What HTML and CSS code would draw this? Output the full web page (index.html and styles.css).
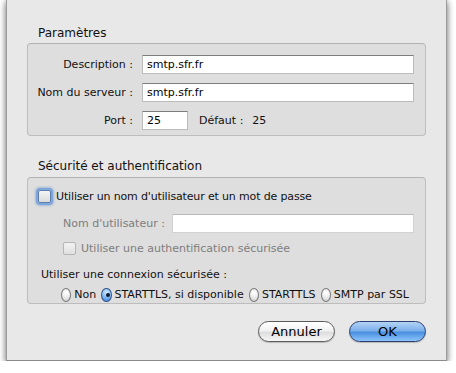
FILE: index.html
```html
<!DOCTYPE html>
<html lang="fr">
<head>
<meta charset="utf-8">
<title>Paramètres SMTP</title>
<link rel="stylesheet" href="styles.css">
</head>
<body>
<div class="sheet">
  <div class="section-title">Paramètres</div>
  <div class="box box-params">
    <div class="form-row">
      <label class="lbl">Description :</label>
      <div class="field wide">smtp.sfr.fr</div>
    </div>
    <div class="form-row">
      <label class="lbl">Nom du serveur :</label>
      <div class="field wide">smtp.sfr.fr</div>
    </div>
    <div class="form-row">
      <label class="lbl">Port :</label>
      <div class="port-line">
        <div class="field port">25</div>
        <span class="default-lbl">Défaut :</span>
        <span class="default-val">25</span>
      </div>
    </div>
  </div>

  <div class="section-title second">Sécurité et authentification</div>
  <div class="box box-sec">
    <div class="check-row">
      <span class="checkbox focused"></span>
      <span class="tight">Utiliser un nom d'utilisateur et un mot de passe</span>
    </div>
    <div class="user-row">
      <span class="lbl-dis">Nom d'utilisateur :</span>
      <div class="field user"></div>
    </div>
    <div class="check-row sub">
      <span class="checkbox disabled"></span>
      <span class="dis">Utiliser une authentification sécurisée</span>
    </div>
    <div class="conn-lbl">Utiliser une connexion sécurisée :</div>
    <div class="radio-row">
      <span class="radio"></span><span class="rlabel">Non</span>
      <span class="radio on"></span><span class="rlabel">STARTTLS, si disponible</span>
      <span class="radio"></span><span class="rlabel">STARTTLS</span>
      <span class="radio"></span><span class="rlabel">SMTP par SSL</span>
    </div>
  </div>

  <div class="buttons">
    <button class="btn">Annuler</button>
    <button class="btn primary">OK</button>
  </div>
</div>
</body>
</html>
```
FILE: styles.css
```css
html, body {
  margin: 0;
  padding: 0;
  background: #ffffff;
}
body {
  font-family: "DejaVu Sans", "Liberation Sans", sans-serif;
  font-size: 11px;
  color: #111;
}
.sheet {
  margin-left: 6px;
  width: 441px;
  height: 361px;
  background: #e8e8e8;
  border-left: 1px solid #9c9c9c;
  border-right: 1px solid #9c9c9c;
  border-bottom: 1px solid #8a8a8a;
  box-shadow: 0 3px 7px rgba(0,0,0,0.45), -2px 0 4px rgba(0,0,0,0.12), 2px 0 4px rgba(0,0,0,0.12);
  padding: 25px 20px 0 20px;
  box-sizing: border-box;
  display: flex;
  flex-direction: column;
}
.section-title {
  font-size: 12px;
  line-height: 16px;
  height: 16px;
  margin-left: 11px;
  margin-bottom: 2px;
}
.section-title.second {
  margin-top: 22px;
  margin-bottom: 3px;
}
.box {
  background: #dedede;
  border: 1px solid #bdbdbd;
  border-top-color: #b3b3b3;
  border-radius: 4px;
  box-sizing: border-box;
}
.box-params {
  height: 93px;
  padding: 11px 11px 0 0;
  display: flex;
  flex-direction: column;
  gap: 9px;
}
.form-row {
  display: grid;
  grid-template-columns: 105px 1fr;
  column-gap: 9px;
  align-items: center;
  height: 19px;
}
.lbl {
  text-align: right;
  white-space: nowrap;
}
.field {
  height: 19px;
  box-sizing: border-box;
  background: #fff;
  border: 1px solid #bcbcbc;
  border-top-color: #7e7e7e;
  padding: 0 4px;
  line-height: 17px;
  color: #000;
}
.field.port { width: 46px; }
.port-line {
  display: flex;
  align-items: center;
}
.default-lbl { margin-left: 11px; }
.default-val { margin-left: 9px; }

.box-sec {
  height: 127px;
  padding: 10px 11px 0 9px;
  display: flex;
  flex-direction: column;
}
.check-row {
  display: flex;
  align-items: center;
  height: 17px;
}
.tight { letter-spacing: -0.15px; }
.check-row .checkbox { margin-right: 5px; }
.checkbox {
  width: 13px;
  height: 13px;
  box-sizing: border-box;
  border: 1px solid #8a8a8a;
  border-radius: 2px;
  background: linear-gradient(#ffffff, #e6e6e6 60%, #d6d6d6);
  display: inline-block;
}
.checkbox.focused {
  margin-left: 1px;
  border-color: #5c7fb0;
  box-shadow: 0 0 0 2px #7fa6d9, 0 0 2px 3px rgba(110,150,210,0.5);
  background: linear-gradient(#f4f4f4, #dcdcdc);
}
.checkbox.disabled {
  border-color: #b6b6b6;
  background: linear-gradient(#f2f2f2, #e0e0e0);
}
.user-row {
  display: flex;
  align-items: center;
  margin-top: 9px;
  padding-left: 26px;
  height: 19px;
}
.lbl-dis, .dis { color: #7d7d7d; }
.field.user {
  flex: 1;
  margin-left: 7px;
  border-color: #d2d2d2;
  border-top-color: #b8b8b8;
}
.check-row.sub {
  margin-top: 7px;
  padding-left: 26px;
}
.conn-lbl {
  margin-top: 11px;
  margin-left: 4px;
  height: 16px;
  line-height: 16px;
}
.radio-row {
  display: flex;
  align-items: center;
  margin-top: 3px;
  padding-left: 24px;
  height: 17px;
  white-space: nowrap;
}
.radio {
  width: 14px;
  height: 14px;
  box-sizing: border-box;
  border-radius: 50%;
  border: 1px solid #7a7a7a;
  background: radial-gradient(circle at 50% 30%, #ffffff 0%, #f0f0f0 40%, #cfcfcf 100%);
  display: inline-block;
  position: relative;
  margin-right: 3px;
}
.radio.on {
  border-color: #34558a;
  background: radial-gradient(circle at 50% 30%, #d7ecff 0%, #86bdf4 45%, #3a7fd6 100%);
}
.radio.on::after {
  content: "";
  position: absolute;
  left: 4px;
  top: 4px;
  width: 4px;
  height: 4px;
  border-radius: 50%;
  background: #0d1a2c;
}
.rlabel { margin-right: 5px; }

.buttons {
  display: flex;
  justify-content: flex-end;
  gap: 14px;
  margin-top: 17px;
}
.btn {
  width: 77px;
  height: 21px;
  border-radius: 11px;
  border: 1px solid #5a5a5a;
  background: linear-gradient(#ffffff 0%, #f2f2f2 45%, #dedede 55%, #f7f7f7 100%);
  font-family: "DejaVu Sans", "Liberation Sans", sans-serif;
  font-size: 13px;
  color: #000;
  padding: 0;
  line-height: 19px;
  box-shadow: 0 1px 1px rgba(0,0,0,0.2);
}
.btn.primary {
  border-color: #2a3f6f;
  background: linear-gradient(#b4d3f5 0%, #7cb0ea 45%, #4b8fe0 55%, #8dc4fb 100%);
}
```
